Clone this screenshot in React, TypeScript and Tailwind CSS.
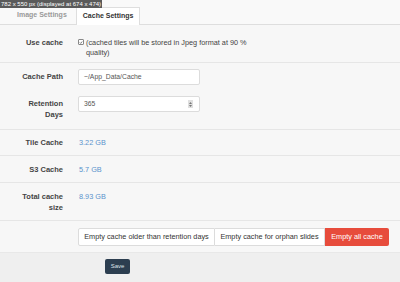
import React from "react";

function Label({ children }: { children: React.ReactNode }) {
  return (
    <div className="w-[63px] shrink-0 text-right font-bold text-[7.5px] leading-[10.5px] text-[#444]">
      {children}
    </div>
  );
}

function Row({ children, className }: { children: React.ReactNode; className?: string }) {
  return <div className={"flex border-b border-[#e6e6e6] " + (className ?? "")}>{children}</div>;
}

export default function App() {
  return (
    <div className="relative w-[400px] h-[282px] overflow-hidden bg-[#f7f7f7] font-['Liberation_Sans',Arial,sans-serif]">
      <div className="absolute left-0 top-0 h-[8px] px-[1px] bg-[#5a5a5a] text-white text-[6px] leading-[8px] whitespace-nowrap">
        782 x 550 px (displayed at 674 x 474)
      </div>

      {/* tabs */}
      <div className="flex h-[25px] items-end pl-[8px] border-b border-[#dedede] bg-[#f9f9f9]">
        <div className="h-[17px] px-[9px] flex items-center text-[7px] font-bold text-[#9a9a9a]">
          Image Settings
        </div>
        <div className="h-[18px] -mb-px px-[6px] flex items-center bg-white border border-b-0 border-[#dedede] text-[7px] font-bold text-[#333]">
          Cache Settings
        </div>
      </div>

      <div className="flex flex-col">
        <Row className="h-[38px] pt-[13px]">
          <Label>Use cache</Label>
          <div className="ml-[15px] flex items-start text-[7.3px] leading-[10px] text-[#444]">
            <span className="mt-[1px] w-[6px] h-[6px] border border-[#888] rounded-[1px] flex items-center justify-center bg-white">
              <svg viewBox="0 0 10 10" className="w-[5px] h-[5px]">
                <path d="M2 5 L4.2 7.2 L8 2.5" fill="none" stroke="#333" strokeWidth="1.6" />
              </svg>
            </span>
            <span className="ml-[2px]">
              (cached tiles will be stored in Jpeg format at 90 %
              <br />
              quality)
            </span>
          </div>
        </Row>

        <Row className="h-[67px] flex-col">
          <div className="flex items-center mt-[6px]">
            <Label>Cache Path</Label>
            <div className="ml-[15px] w-[122px] h-[16px] bg-white border border-[#dcdcdc] rounded-[2px] flex items-center pl-[5px] text-[6.8px] text-[#555]">
              ~/App_Data/Cache
            </div>
          </div>
          <div className="flex items-start mt-[11px]">
            <div className="pt-[3px]">
              <Label>
                Retention
                <br />
                Days
              </Label>
            </div>
            <div className="ml-[15px] w-[122px] h-[16px] bg-white border border-[#dcdcdc] rounded-[2px] flex items-center justify-between pl-[5px] pr-[6px] text-[6.8px] text-[#555]">
              <span>365</span>
              <span className="w-[5px] h-[8px] bg-[#e0e0e0] flex flex-col items-center justify-center gap-[1px]">
                <svg viewBox="0 0 6 3" className="w-[3px] h-[2px]">
                  <path d="M0 3 L3 0 L6 3Z" fill="#555" />
                </svg>
                <svg viewBox="0 0 6 3" className="w-[3px] h-[2px]">
                  <path d="M0 0 L6 0 L3 3Z" fill="#555" />
                </svg>
              </span>
            </div>
          </div>
        </Row>

        <Row className="h-[26px] pt-[8px]">
          <Label>Tile Cache</Label>
          <div className="ml-[16px] text-[7.3px] leading-[10.5px] text-[#5a93cc]">3.22 GB</div>
        </Row>
        <Row className="h-[27px] pt-[9px]">
          <Label>S3 Cache</Label>
          <div className="ml-[16px] text-[7.3px] leading-[10.5px] text-[#5a93cc]">5.7 GB</div>
        </Row>
        <Row className="h-[38px] pt-[9px]">
          <Label>
            Total cache
            <br />
            size
          </Label>
          <div className="ml-[16px] text-[7.3px] leading-[10.5px] text-[#5a93cc]">8.93 GB</div>
        </Row>

        <div className="h-[31px] flex items-start pt-[7px] pl-[78px]">
          <div className="flex h-[18px] text-[7.3px] whitespace-nowrap">
            <div className="w-[137px] bg-white border border-[#dcdcdc] rounded-l-[2px] flex items-center justify-center text-[#333]">
              Empty cache older than retention days
            </div>
            <div className="w-[110px] bg-white border border-l-0 border-[#dcdcdc] flex items-center justify-center text-[#333]">
              Empty cache for orphan slides
            </div>
            <div className="w-[64px] bg-[#e74c3c] rounded-r-[2px] flex items-center justify-center text-white">
              Empty all cache
            </div>
          </div>
        </div>

        <div className="h-[40px] bg-[#efefef] border-t border-[#e8e8e8] pl-[105px] pt-[6px]">
          <div className="w-[25px] h-[15px] bg-[#2c3e50] rounded-[2px] flex items-center justify-center text-[6px] text-[#dfe4ea]">
            Save
          </div>
        </div>
      </div>
    </div>
  );
}
